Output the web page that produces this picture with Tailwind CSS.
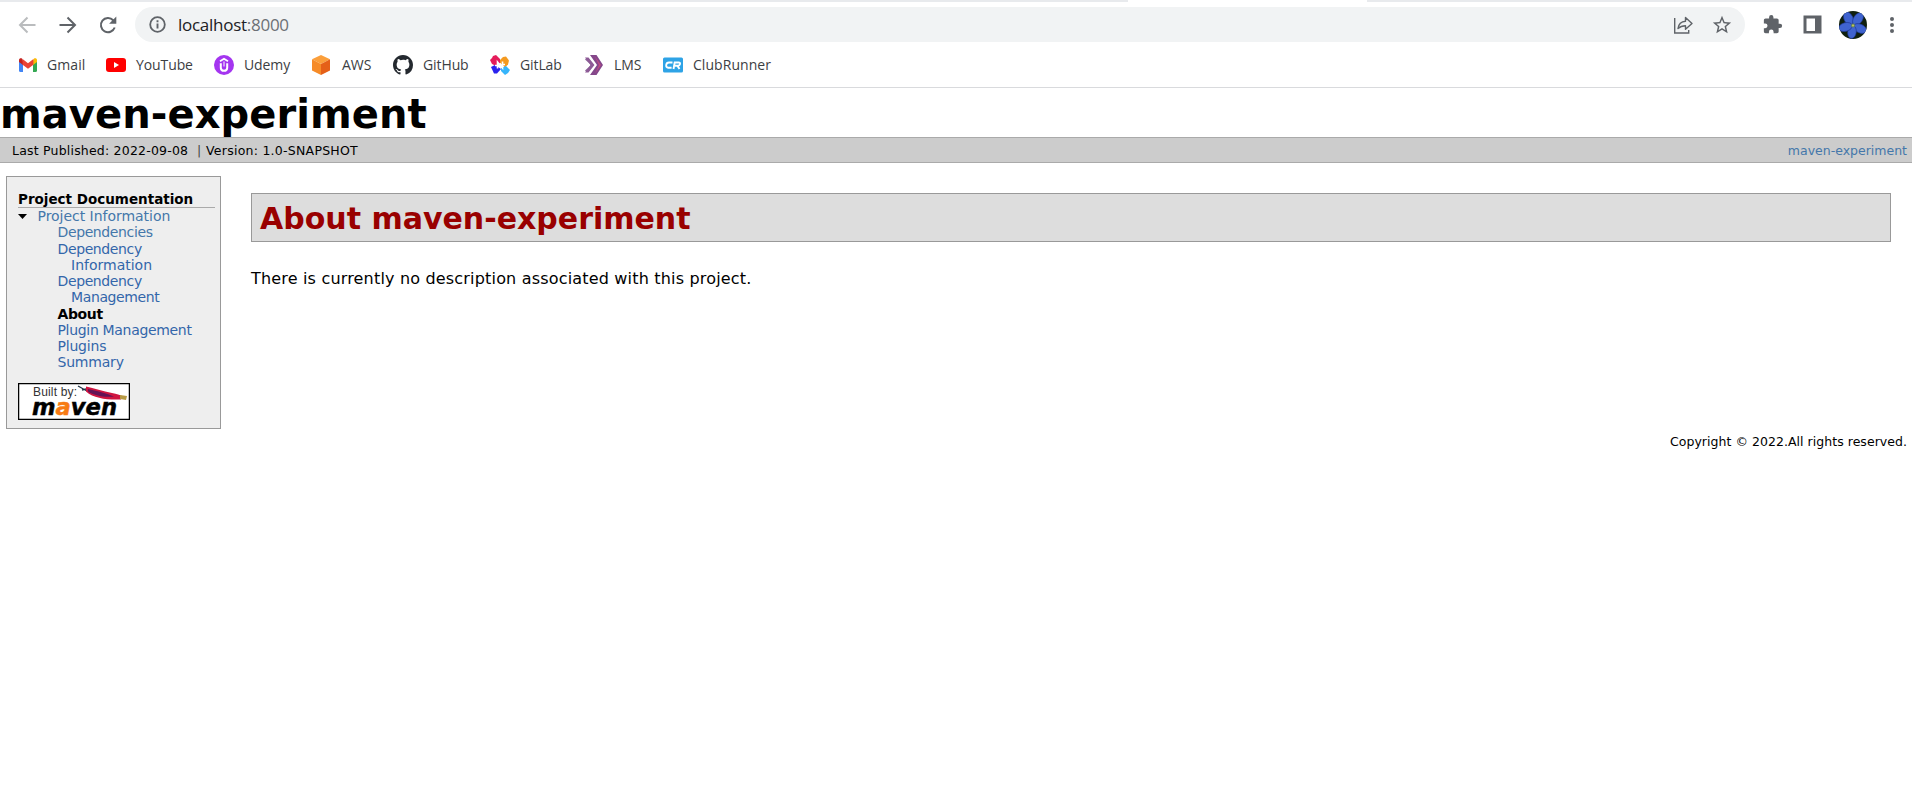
<!DOCTYPE html>
<html lang="en">
<head>
<meta charset="utf-8">
<title>maven-experiment – About</title>
<script src="https://cdn.jsdelivr.net/npm/@tailwindcss/browser@4"></script>
</head>
<body class="h-[800px] overflow-hidden bg-white font-['DejaVu_Sans',sans-serif] text-black">
<header class="h-[88px] border-b border-[#d9dadd] font-['Open_Sans',sans-serif]">
  <div class="flex h-0.5 bg-[#e8eaed]"><div class="ml-[1128px] w-[239px] bg-white"></div></div>
  <div class="flex h-[45px] items-center">
    <svg class="ml-[18px] size-[18px]" viewBox="0 0 18 18" fill="none" stroke="#babcbe" stroke-width="2"><path d="M17.500 9H2.500M9.500 1.500L2 9l7.500 7.500"/></svg>
    <svg class="ml-[23px] size-[18px]" viewBox="0 0 18 18" fill="none" stroke="#5f6368" stroke-width="2"><path d="M.5 9h15M8.500 1.500L16 9l-7.500 7.500"/></svg>
    <svg class="ml-[22px] size-[18px]" viewBox="0 0 18 18" fill="none"><path d="M15.700 11.500A7.100 7.100 0 1 1 14.200 4.200L15.500 5.500" stroke="#5f6368" stroke-width="2"/><path d="M17.300 .5v7.200h-7.200z" fill="#5f6368"/></svg>
    <div class="ml-[18px] flex h-[35px] w-[1610px] items-center rounded-full bg-[#f1f3f4] pr-[12px] pl-[14px]">
      <svg class="size-[17px]" viewBox="0 0 17 17" fill="none" stroke="#5f6368"><circle cx="8.500" cy="8.500" r="7.300" stroke-width="1.800"/><path d="M8.500 7.500v5M8.500 4.300v1.900" stroke-width="1.900"/></svg>
      <div class="ml-[12px] text-[17px] leading-[20px] tracking-[-0.27px] text-[#202124]">localhost<span class="text-[#6c7075]">:8000</span></div>
      <svg class="ml-auto size-[20px]" viewBox="0 0 20 20" fill="none" stroke="#5f6368" stroke-width="1.400"><path d="M1.700 3v15h14v-3"/><path d="M5 13.500c.6-4.500 3-7 7.500-7.300V2.500l6.500 6-6.500 5.800v-3.600c-3.500 0-5.500.8-7.500 2.800z" stroke-linejoin="round"/></svg>
      <svg class="ml-[18px] size-[22px]" viewBox="0 0 24 24" fill="#5f6368"><path d="M22 9.240l-7.190-.62L12 2 9.190 8.630 2 9.240l5.460 4.730L5.820 21 12 17.270 18.180 21l-1.630-7.030L22 9.240zM12 15.400l-3.760 2.270 1-4.280-3.320-2.880 4.380-.38L12 6.100l1.710 4.040 4.380.38-3.320 2.880 1 4.280L12 15.400z"/></svg>
    </div>
    <svg class="ml-[18px] size-[20px]" viewBox="1 1 23 23" fill="#5f6368"><path d="M20.500 11H19V7c0-1.100-.9-2-2-2h-4V3.500a2.500 2.500 0 0 0-5 0V5H4c-1.100 0-2 .9-2 2v3.800h1.500a2.700 2.700 0 0 1 0 5.400H2V20c0 1.100.9 2 2 2h3.800v-1.500a2.700 2.700 0 0 1 5.400 0V22H17c1.100 0 2-.9 2-2v-4h1.500a2.500 2.500 0 0 0 0-5z"/></svg>
    <svg class="ml-[20px] size-[19px]" viewBox="0 0 19 19"><path d="M.5.500h18v18H.5z" fill="#5f6368"/><path d="M3.500 3.500h8.500v12.500H3.500z" fill="#fff"/></svg>
    <svg class="ml-[17px] size-[28px]" viewBox="0 0 28 28"><defs><clipPath id="av"><circle cx="14" cy="14" r="14"/></clipPath></defs><g clip-path="url(#av)"><path d="M0 0h28v28H0z" fill="#10200f"/><g fill="#3f63cf" stroke="#1d3590" stroke-width=".6"><ellipse cx="9.500" cy="7.500" rx="4.500" ry="7" transform="rotate(-25 9.500 7.500)"/><ellipse cx="19" cy="8" rx="4.500" ry="7" transform="rotate(35 19 8)"/><ellipse cx="21" cy="17.500" rx="4.300" ry="7" transform="rotate(115 21 17.500)"/><ellipse cx="13" cy="21" rx="4.300" ry="6.500" transform="rotate(8 13 21)"/><ellipse cx="6.500" cy="16" rx="4.300" ry="7" transform="rotate(75 6.500 16)"/></g><circle cx="14" cy="14.500" r="1.900" fill="#6c8a58"/><circle cx="14" cy="14.500" r="1" fill="#c5c85c"/></g></svg>
    <svg class="ml-[16px] size-[18px]" viewBox="0 0 18 18" fill="#5f6368"><circle cx="9" cy="3" r="2"/><circle cx="9" cy="9" r="2"/><circle cx="9" cy="15" r="2"/></svg>
  </div>
  <nav class="flex h-[36px] items-center pl-[18px] text-[14px] leading-[20px] tracking-[-0.1px] text-[#3c4043]">
    <a class="flex w-[88px] items-center gap-[9px]"><svg class="size-[20px]" viewBox="0 0 20 20"><path d="M1 5v10.500Q1 17 2.500 17H5V8z" fill="#4285f4"/><path d="M19 5v10.500Q19 17 17.500 17H15V8z" fill="#34a853"/><path d="M15 5.500V10l4-3V5.200c0-2-2-2.500-3.200-1.500z" fill="#fbbc04"/><path d="M5 5.500V10L1 7V5.200c0-2 2-2.500 3.200-1.500z" fill="#c5221f"/><path d="M4.600 4L10 8.200 15.400 4v5.700L10 13.700 4.600 9.700z" fill="#ea4335"/></svg><span class="tracking-[0.1px]">Gmail</span></a>
    <a class="flex w-[108px] items-center gap-[10px]"><svg class="size-[20px]" viewBox="0 0 20 20"><rect y="3" width="20" height="14" rx="3" fill="#f00"/><path d="M8 7v6l5-3z" fill="#fff"/></svg>YouTube</a>
    <a class="flex w-[97px] items-center gap-[10px]"><svg class="size-[20px]" viewBox="0 0 20 20" fill="none" stroke="#fff"><circle cx="10" cy="10" r="10" fill="#a435f0" stroke="none"/><path d="M6.800 8.200v4.500c0 4.200 6.400 4.200 6.400 0V8.200" stroke-width="2"/><path d="M6 6.300l4-2.500 4 2.500" stroke-width="1.700"/><path d="M10 6.500v5" stroke-width="1"/></svg>Udemy</a>
    <a class="flex w-[82px] items-center gap-[11px]"><svg class="size-[20px]" viewBox="0 0 20 20"><path d="M10 0l9 4.300L10 9 1 4.300z" fill="#fb9f3b"/><path d="M1 4.300L10 9v11l-9-4.500z" fill="#f68b28"/><path d="M19 4.300L10 9v11l9-4.500z" fill="#e56018"/></svg><span class="tracking-normal">AWS</span></a>
    <a class="flex w-[97px] items-center gap-[10px]"><svg class="size-[20px]" viewBox="0 0 16 16" fill="#24292f"><path d="M8 0C3.580 0 0 3.580 0 8c0 3.540 2.290 6.530 5.470 7.590.4.070.55-.17.55-.38 0-.19-.01-.82-.01-1.490-2.010.37-2.530-.49-2.690-.94-.09-.23-.48-.94-.82-1.130-.28-.15-.68-.52-.01-.53.63-.01 1.080.58 1.230.82.72 1.210 1.870.87 2.330.66.07-.52.28-.87.51-1.070-1.780-.2-3.640-.89-3.640-3.950 0-.87.31-1.590.82-2.150-.08-.2-.36-1.020.08-2.120 0 0 .67-.21 2.200.82A7.600 7.600 0 0 1 8 3.860c.68 0 1.360.09 2 .27 1.530-1.040 2.200-.82 2.200-.82.44 1.100.16 1.920.08 2.120.51.56.82 1.270.82 2.150 0 3.070-1.870 3.750-3.650 3.950.29.25.54.73.54 1.480 0 1.070-.01 1.930-.01 2.200 0 .21.15.46.55.38A8.010 8.010 0 0 0 16 8c0-4.420-3.580-8-8-8z"/></svg>GitHub</a>
    <a class="flex w-[95px] items-center gap-[10px]"><svg class="size-[20px]" viewBox="0 0 20 20"><path d="M0 5l2-2 1-2 3-1 4 4v4L6 11 2 9z" fill="#e51c5b"/><path d="M10 5l3-3 3-.5 3 4-1 4-3 3-5-5z" fill="#f49a20"/><path d="M1 12l4-2 6 4-4 4.500H4z" fill="#2a22ee"/><path d="M11 13l5-2 4 4-2 3-3 2-4-4z" fill="#36b5fb"/><path d="M7.500 13.500V7l5 6V6.500M5 10.500h2.500M12.500 9.500H15" fill="none" stroke="#fff" stroke-width="1.600"/></svg>GitLab</a>
    <a class="flex w-[78px] items-center gap-[9px]"><svg class="size-[20px]" viewBox="0 0 20 20"><path d="M0 4.500L6 10 0 15.500 1.500 17 8.500 10 1.500 3z" fill="#8f6a9c"/><path d="M0 2.500h3.500L9.500 10l-6 7.500H0L5.500 10z" fill="#8d5a96"/><path d="M5 0h6.500L18 10l-6.500 10H5l7-10z" fill="#84478a"/><path d="M9.500 1l6.500 9-6 8.500 4-8.500z" fill="#bd4a82"/></svg>LMS</a>
    <a class="flex items-center gap-[10px]"><svg class="size-[20px]" viewBox="0 0 20 20"><rect y="2.500" width="20" height="15" rx="1.500" fill="#2ea3e6"/><path d="M9.500 7.500H6Q3.500 7.500 3.200 10T5.200 12.700H8.600M10.500 14l1.200-6.500h4q1.600 0 1.300 1.600T15 10.700h-3M14.500 11l2 3" fill="none" stroke="#fff" stroke-width="1.900"/></svg><span class="tracking-[0.05px]">ClubRunner</span></a>
  </nav>
</header>
<h1 class="h-[49px] text-[40px] leading-[53px] font-bold tracking-[0.08px]">maven-experiment</h1>
<div class="flex h-[26px] items-center justify-between border-y border-[#aaa] bg-[#ccc] pt-[2px] pr-[5px] pl-[12px] text-[12.500px]">
  <div class="flex whitespace-pre"><span class="w-[185px] tracking-[0.2px]">Last Published: 2022-09-08</span><span class="w-[9px] text-[#444]">|</span><span class="tracking-[0.25px]">Version: 1.0-SNAPSHOT</span></div>
  <a class="text-[#47a]">maven-experiment</a>
</div>
<main class="flex items-start pt-[13px] pl-[6px]">
  <aside class="h-[253px] w-[215px] border border-[#999] bg-[#eee] pt-[13px] pr-[5px] pl-[11px] text-[14px] leading-[16.250px] text-[#36a]">
    <h5 class="h-[18px] border-b border-[#aaa] text-[13.500px] leading-[19px] font-bold text-black">Project Documentation</h5>
    <div class="flex items-center tracking-[-0.03px] text-[#47a]"><svg class="mr-[10.500px] h-[5px] w-[9px]" viewBox="0 0 9 5"><path d="M0 0h9L4.500 5z"/></svg>Project Information</div>
    <ul class="pl-[39.500px] tracking-[-0.38px]">
      <li class="text-[#47a]">Dependencies</li>
      <li>Dependency</li><li class="pl-[13.500px] tracking-normal">Information</li>
      <li>Dependency</li><li class="pl-[13.500px]">Management</li>
      <li class="font-bold text-black">About</li>
      <li class="tracking-[-0.32px]">Plugin Management</li><li class="tracking-[-0.2px]">Plugins</li><li class="tracking-[-0.2px]">Summary</li>
    </ul>
    <svg class="mt-[12px] h-[37px] w-[112px]" viewBox="0 0 112 37"><path d="M.5.5h111v36H.5z" fill="#fff" stroke="#000" stroke-width="1.500"/><text x="15" y="13" font-family="Liberation Sans" font-size="12" fill="#333" textLength="44" letter-spacing="0">Built by:</text><path d="M60 3l9 5M64 7l4-1" stroke="#234" stroke-width="1.300"/><path d="M68 3.500c8 2 17 4.500 26 6.500 5 1 8 2 10 3l-1 3.500c-14 .5-27-1-35-8z" fill="#cf1540"/><path d="M70 6c8 1.500 19 4.500 26 7.500-11 1-20-1-26-5z" fill="#641356"/><path d="M102 12l7 1-1 4-6-1z" fill="#b79a45"/><text x="14" y="32" font-family="DejaVu Sans" font-size="22.500" font-weight="bold" font-style="italic" textLength="85" lengthAdjust="spacingAndGlyphs" letter-spacing="0" stroke="#000" stroke-width=".5">m<tspan fill="#f77b14" stroke="#f77b14">a</tspan>ven</text></svg>
  </aside>
  <section class="mt-[17px] ml-[30px] w-[1640px]">
    <h2 class="h-[49px] border border-[#999] bg-[#ddd] pl-[8px] text-[30px] leading-[50px] font-bold text-[#900]">About maven-experiment</h2>
    <p class="mt-[25px] text-[16px] leading-[24px] tracking-[0.18px]">There is currently no description associated with this project.</p>
  </section>
</main>
<footer class="pt-[4px] pr-[5px] text-right text-[12.500px] leading-[18px] tracking-[0.04px]">Copyright © 2022.All rights reserved.</footer>
</body>
</html>
